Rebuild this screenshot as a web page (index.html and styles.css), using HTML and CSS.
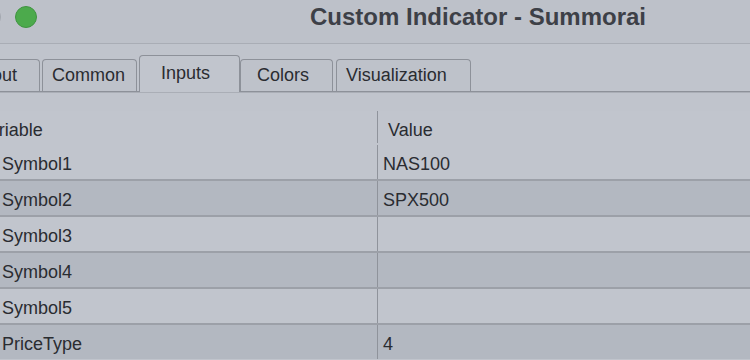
FILE: index.html
```html
<!DOCTYPE html>
<html>
<head>
    <meta charset="UTF-8">
    <title>Custom Indicator - Summorai</title>
    <link rel="stylesheet" href="styles.css">
</head>
<body>
    <div class="window">
        <!-- 标题栏 -->
        <div class="titlebar">
            <span class="light light-gray"></span>
            <span class="light light-green"></span>
            <h1 class="title">Custom Indicator - Summorai</h1>
        </div>

        <!-- 选项卡 -->
        <div class="tabs">
            <div class="tab tab-about">About</div>
            <div class="tab tab-common">Common</div>
            <div class="tab tab-inputs active">Inputs</div>
            <div class="tab tab-colors">Colors</div>
            <div class="tab tab-vis">Visualization</div>
        </div>

        <!-- 参数表 -->
        <div class="grid">
            <div class="row head">
                <div class="cell name">Variable</div>
                <div class="cell value">Value</div>
            </div>
            <div class="row first">
                <div class="cell name">Symbol1</div>
                <div class="cell value">NAS100</div>
            </div>
            <div class="row dark">
                <div class="cell name">Symbol2</div>
                <div class="cell value">SPX500</div>
            </div>
            <div class="row">
                <div class="cell name">Symbol3</div>
                <div class="cell value"></div>
            </div>
            <div class="row dark">
                <div class="cell name">Symbol4</div>
                <div class="cell value"></div>
            </div>
            <div class="row">
                <div class="cell name">Symbol5</div>
                <div class="cell value"></div>
            </div>
            <div class="row dark">
                <div class="cell name">PriceType</div>
                <div class="cell value">4</div>
            </div>
        </div>
    </div>
</body>
</html>
```

FILE: styles.css
```css
body {
    margin: 0;
    width: 750px;
    height: 360px;
    overflow: hidden;
    background: #c0c4cc;
    font-family: "Liberation Sans", Arial, sans-serif;
    color: #2a2c31;
}
.window {
    width: 750px;
}
.titlebar {
    display: flex;
    align-items: center;
    height: 44px;
    padding-bottom: 9px;
    box-sizing: border-box;
    background: #bdc1c9;
    border-bottom: 1px solid #a9adb5;
}
.light {
    flex: none;
    width: 22px;
    height: 22px;
    border-radius: 50%;
    box-sizing: border-box;
}
.light-gray {
    margin-left: -21px;
    background: #b0b4bb;
    border: 1px solid #a4a8b0;
}
.light-green {
    margin-left: 14px;
    background: #4caa4c;
    border: 1px solid #3f9440;
}
.title {
    margin: 0 0 0 273px;
    font-size: 24px;
    font-weight: bold;
    color: #3d4047;
    white-space: nowrap;
    line-height: 1;
}
/* 选项卡 */
.tabs {
    display: flex;
    align-items: flex-end;
    height: 36px;
    margin-top: 11px;
    margin-left: -40px;
    border-bottom: 1px solid #8d9199;
    box-shadow: 0 1px 0 #aaaeb6;
}
.tab {
    box-sizing: border-box;
    height: 32px;
    line-height: 31px;
    font-size: 18px;
    padding-left: 9px;
    background: #bec2ca;
    border: 1px solid #8d9199;
    border-bottom: none;
    border-radius: 4px 4px 0 0;
    white-space: nowrap;
}
.tab-about {
    width: 80px;
    margin-right: 2px;
}
.tab-common {
    width: 95px;
    margin-right: 2px;
}
.tab-inputs {
    width: 101px;
    padding-left: 21px;
}
.tab-colors {
    width: 93px;
    padding-left: 16px;
    margin-right: 3px;
}
.tab-vis {
    width: 135px;
}
.tab.active {
    height: 37px;
    line-height: 34px;
    margin-bottom: -1px;
    background: #c1c5cd;
    position: relative;
    z-index: 1;
}
/* 参数表 */
.grid {
    margin-top: 19px;
    margin-left: -30px;
}
.row {
    display: flex;
    height: 36px;
    box-sizing: border-box;
    border-top: 2px solid #9ca0a8;
    background: #c1c5cd;
    font-size: 18px;
}
.row.head,
.row.first {
    border-top: none;
}
.row.head {
    height: 32px;
}
.row.first {
    padding-top: 2px;
}
.row.dark {
    background: #b3b8c1;
}
.cell {
    line-height: 33px;
    padding-top: 3px;
    white-space: nowrap;
}
.cell.name {
    width: 407px;
    flex: none;
    padding-left: 32px;
    box-sizing: border-box;
}
.cell.value {
    flex: 1;
    padding-left: 5px;
    border-left: 1px solid #8f939b;
}
.head .cell {
    line-height: 26px;
    padding-top: 6px;
}
.head .cell.name {
    padding-left: 8px;
}
.head .cell.value {
    padding-left: 10px;
}
```
